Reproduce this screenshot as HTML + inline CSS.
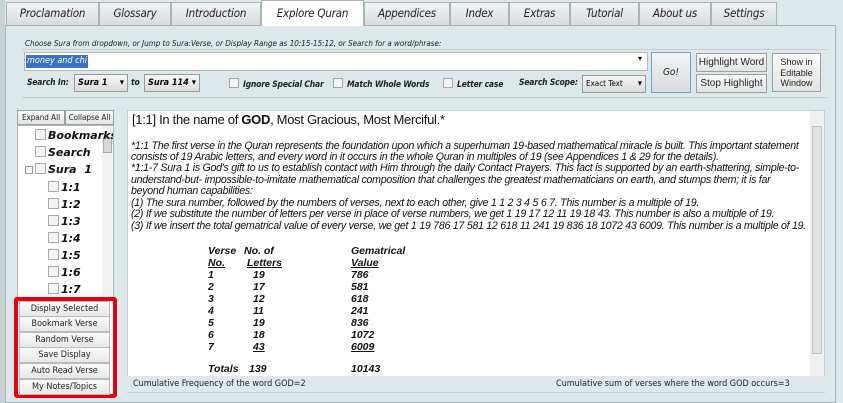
<!DOCTYPE html>
<html><head><meta charset="utf-8"><style>
*{box-sizing:border-box;margin:0;padding:0}
body{width:843px;height:403px;overflow:hidden;background:#dde8eb;font-family:"Liberation Sans",sans-serif;position:relative}
.a{position:absolute}
.tab{position:absolute;top:2px;height:23px;background:linear-gradient(#f2f4f4,#d6dcdd);border:1px solid #a9b3b6;border-bottom:none;font:italic 11.5px "DejaVu Sans Condensed","DejaVu Sans",sans-serif;color:#222;text-align:center;line-height:21px;letter-spacing:-0.2px}
.tab.sel{top:0;height:26px;background:#fff;line-height:24px}
.cond{font-family:"DejaVu Sans Condensed","DejaVu Sans",sans-serif;font-style:italic}
.btn{position:absolute;background:linear-gradient(#fbfbfb,#e2e4e4);border:1px solid #9aa0a2;font-size:10px;color:#222;text-align:center}
.cb{display:inline-block;width:10px;height:10px;border:1px solid #aaa;background:#f4f4f4;vertical-align:-1px;margin-right:4px}
.sel2{position:absolute;height:18px;background:linear-gradient(#f6f6f6,#dcdcdc);border:1px solid #999;font:italic bold 9px "DejaVu Sans Condensed",sans-serif;line-height:16px;padding-left:3px;white-space:nowrap;overflow:hidden}
.sel2:after{content:"▾";position:absolute;right:3px;top:0;font-style:normal;font-size:9px}
.tree{font:italic bold 11px "DejaVu Sans",sans-serif;color:#111}
.tree div{position:absolute;white-space:nowrap}
.tree .cb{width:11px;height:11px;margin-right:2px}
.rb{position:absolute;left:5px;width:91px;height:16px;border:1px solid #b8bcbd;background:linear-gradient(#fafafa,#e6e8e8);font:9px "DejaVu Sans Condensed",sans-serif;text-align:center;line-height:14px;color:#222}
.txt{font:italic 10.6px "Liberation Sans",sans-serif;color:#111;letter-spacing:-0.26px}
.txt div{position:absolute;left:4px;white-space:nowrap}
.tb{font:italic bold 10.5px "Liberation Sans",sans-serif;color:#111}
.tb div{position:absolute;white-space:nowrap}
.lbl{position:absolute;top:78px;font:italic bold 8.5px "DejaVu Sans Condensed",sans-serif;color:#222;white-space:nowrap;letter-spacing:-0.2px}
u{text-decoration:underline}
</style></head><body>
<div class="a" style="left:0;top:0;width:5px;height:403px;background:#c9d2d5"></div>
<div class="a" style="left:5px;top:25px;width:831px;height:378px;border:1px solid #a9b3b6;background:#dde8eb"></div>
<div class="tab" style="left:6px;width:93px">Proclamation</div>
<div class="tab" style="left:99px;width:72px">Glossary</div>
<div class="tab" style="left:171px;width:90px">Introduction</div>
<div class="tab sel" style="left:261px;width:103px">Explore Quran</div>
<div class="tab" style="left:364px;width:86px">Appendices</div>
<div class="tab" style="left:450px;width:59px">Index</div>
<div class="tab" style="left:509px;width:61px">Extras</div>
<div class="tab" style="left:570px;width:69px">Tutorial</div>
<div class="tab" style="left:639px;width:72px">About us</div>
<div class="tab" style="left:711px;width:66px">Settings</div>

<div class="a cond" style="left:25px;top:39px;font-size:8px;color:#222;white-space:nowrap">Choose Sura from dropdown, or Jump to Sura:Verse, or Display Range as 10:15-15:12, or Search for a word/phrase:</div>
<div class="a" style="left:22px;top:49px;width:805px;height:1px;background:#c5d0d3"></div>
<div class="a" style="left:24px;top:52px;width:624px;height:19px;background:#fff;border:1px solid #b5b9ba"></div>
<div class="a cond" style="left:26px;top:55px;height:13px;background:#3a72c8;color:#fff;font-size:9px;line-height:13px;padding:0 1px">money and chi</div>
<div class="a" style="left:638px;top:54px;font-size:8px">▾</div>
<div class="btn" style="left:651px;top:52px;width:40px;height:41px;border-color:#6fa4c4;font:italic 10px 'DejaVu Sans Condensed',sans-serif;line-height:39px;background:linear-gradient(#f2f4f5,#d9dcdd)">Go!</div>
<div class="btn" style="left:696px;top:53px;width:71px;height:19px;line-height:17px">Highlight Word</div>
<div class="btn" style="left:696px;top:74px;width:71px;height:19px;line-height:17px">Stop Highlight</div>
<div class="btn" style="left:772px;top:53px;width:49px;height:39px;font-size:9px;line-height:10.5px;padding-top:3px">Show in<br>Editable<br>Window</div>

<div class="lbl" style="left:27px">Search In:</div>
<div class="sel2" style="left:74px;top:74px;width:54px">Sura 1</div>
<div class="lbl" style="left:131px">to</div>
<div class="sel2" style="left:144px;top:74px;width:56px">Sura 114</div>
<div class="lbl" style="left:229px"><span class="cb"></span>Ignore Special Char</div>
<div class="lbl" style="left:333px"><span class="cb"></span>Match Whole Words</div>
<div class="lbl" style="left:443px"><span class="cb"></span>Letter case</div>
<div class="lbl" style="left:519px">Search Scope:</div>
<div class="sel2" style="left:582px;top:75px;width:64px;font:normal 8px 'DejaVu Sans Condensed',sans-serif;line-height:16px">Exact Text</div>
<div class="a" style="left:22px;top:97px;width:805px;height:1px;background:#c5d0d3"></div>

<div class="btn" style="left:17px;top:110px;width:48px;height:15px;font:8px 'DejaVu Sans Condensed',sans-serif;line-height:13px">Expand All</div>
<div class="btn" style="left:65px;top:110px;width:49px;height:15px;font:8px 'DejaVu Sans Condensed',sans-serif;line-height:13px">Collapse All</div>
<div class="a tree" style="left:17px;top:125px;width:97px;height:173px;background:#fff;border:1px solid #b5b9ba;overflow:hidden">
<div class="a" style="left:84px;top:0;width:11px;height:173px;background:#f2f2f2"></div>
<div class="a" style="left:85px;top:11px;width:9px;height:16px;background:#d8d8d8;border:1px solid #aaa"></div>
<div style="left:17px;top:3px"><span class="cb"></span>Bookmarks</div>
<div style="left:17px;top:20px"><span class="cb"></span>Search</div>
<div style="left:17px;top:37px"><span class="cb"></span>Sura&nbsp; 1</div>
<div style="left:7px;top:40px;width:8px;height:8px;border:1px solid #999"></div>
<div style="left:30px;top:55px"><span class="cb"></span>1:1</div>
<div style="left:30px;top:72px"><span class="cb"></span>1:2</div>
<div style="left:30px;top:89px"><span class="cb"></span>1:3</div>
<div style="left:30px;top:106px"><span class="cb"></span>1:4</div>
<div style="left:30px;top:123px"><span class="cb"></span>1:5</div>
<div style="left:30px;top:140px"><span class="cb"></span>1:6</div>
<div style="left:30px;top:157px"><span class="cb"></span>1:7</div>
</div>
<div class="a" style="left:14px;top:297px;width:103px;height:101px;border:4px solid #e8000d;border-radius:3px;background:#fff">
<div class="rb" style="top:0px;left:1px">Display Selected</div>
<div class="rb" style="top:15px;left:1px">Bookmark Verse</div>
<div class="rb" style="top:31px;left:1px">Random Verse</div>
<div class="rb" style="top:46px;left:1px">Save Display</div>
<div class="rb" style="top:62px;left:1px">Auto Read Verse</div>
<div class="rb" style="top:78px;left:1px">My Notes/Topics</div>
</div>

<div class="a" style="left:127px;top:110px;width:698px;height:267px;background:#fff;border:1px solid #c9cfd1"></div>
<div class="a" style="left:810px;top:111px;width:14px;height:265px;background:#f0f0f0"></div>
<div class="a" style="left:812px;top:126px;width:10px;height:228px;background:#e2e2e2;border:1px solid #c3c3c3"></div>
<div class="a" style="left:132px;top:112px;font-size:13px;color:#111;letter-spacing:-0.3px;white-space:nowrap">[1:1] In the name of <b>GOD</b>, Most Gracious, Most Merciful.*</div>
<div class="a txt" style="left:127px;top:0">
<div style="top:140px">*1:1 The first verse in the Quran represents the foundation upon which a superhuman 19-based mathematical miracle is built. This important statement</div>
<div style="top:151px">consists of 19 Arabic letters, and every word in it occurs in the whole Quran in multiples of 19 (see Appendices 1 &amp; 29 for the details).</div>
<div style="top:162px">*1:1-7 Sura 1 is God's gift to us to establish contact with Him through the daily Contact Prayers. This fact is supported by an earth-shattering, simple-to-</div>
<div style="top:173.5px">understand-but- impossible-to-imitate mathematical composition that challenges the greatest mathematicians on earth, and stumps them; it is far</div>
<div style="top:185px">beyond human capabilities:</div>
<div style="top:196.5px">(1) The sura number, followed by the numbers of verses, next to each other, give 1 1 2 3 4 5 6 7. This number is a multiple of 19.</div>
<div style="top:208px">(2) If we substitute the number of letters per verse in place of verse numbers, we get 1 19 17 12 11 19 18 43. This number is also a multiple of 19.</div>
<div style="top:219.5px">(3) If we insert the total gematrical value of every verse, we get 1 19 786 17 581 12 618 11 241 19 836 18 1072 43 6009. This number is a multiple of 19.</div>
</div>
<div class="a tb" style="left:0;top:0">
<div style="left:208px;top:245px">Verse</div><div style="left:244px;top:245px">No. of</div><div style="left:351px;top:245px">Gematrical</div>
<div style="left:208px;top:257px"><u>No.</u></div><div style="left:247px;top:257px"><u>Letters</u></div><div style="left:351px;top:257px"><u>Value</u></div>
<div style="left:208px;top:269px">1</div><div style="left:253px;top:269px">19</div><div style="left:351px;top:269px">786</div>
<div style="left:208px;top:281px">2</div><div style="left:253px;top:281px">17</div><div style="left:351px;top:281px">581</div>
<div style="left:208px;top:293px">3</div><div style="left:253px;top:293px">12</div><div style="left:351px;top:293px">618</div>
<div style="left:208px;top:305px">4</div><div style="left:253px;top:305px">11</div><div style="left:351px;top:305px">241</div>
<div style="left:208px;top:317px">5</div><div style="left:253px;top:317px">19</div><div style="left:351px;top:317px">836</div>
<div style="left:208px;top:329px">6</div><div style="left:253px;top:329px">18</div><div style="left:351px;top:329px">1072</div>
<div style="left:208px;top:341px">7</div><div style="left:253px;top:341px"><u>43</u></div><div style="left:351px;top:341px"><u>6009</u></div>
<div style="left:208px;top:363px">Totals</div><div style="left:249px;top:363px">139</div><div style="left:351px;top:363px">10143</div>
</div>
<div class="a" style="left:127px;top:376px;width:698px;height:17px;background:#dfe9ec;border-bottom:1px solid #c5d0d3"></div>
<div class="a" style="left:133px;top:379px;font:9px 'DejaVu Sans Condensed',sans-serif;color:#222;white-space:nowrap">Cumulative Frequency of the word GOD=2</div>
<div class="a" style="left:556px;top:379px;font:9px 'DejaVu Sans Condensed',sans-serif;color:#222;white-space:nowrap">Cumulative sum of verses where the word GOD occurs=3</div>
</body></html>
